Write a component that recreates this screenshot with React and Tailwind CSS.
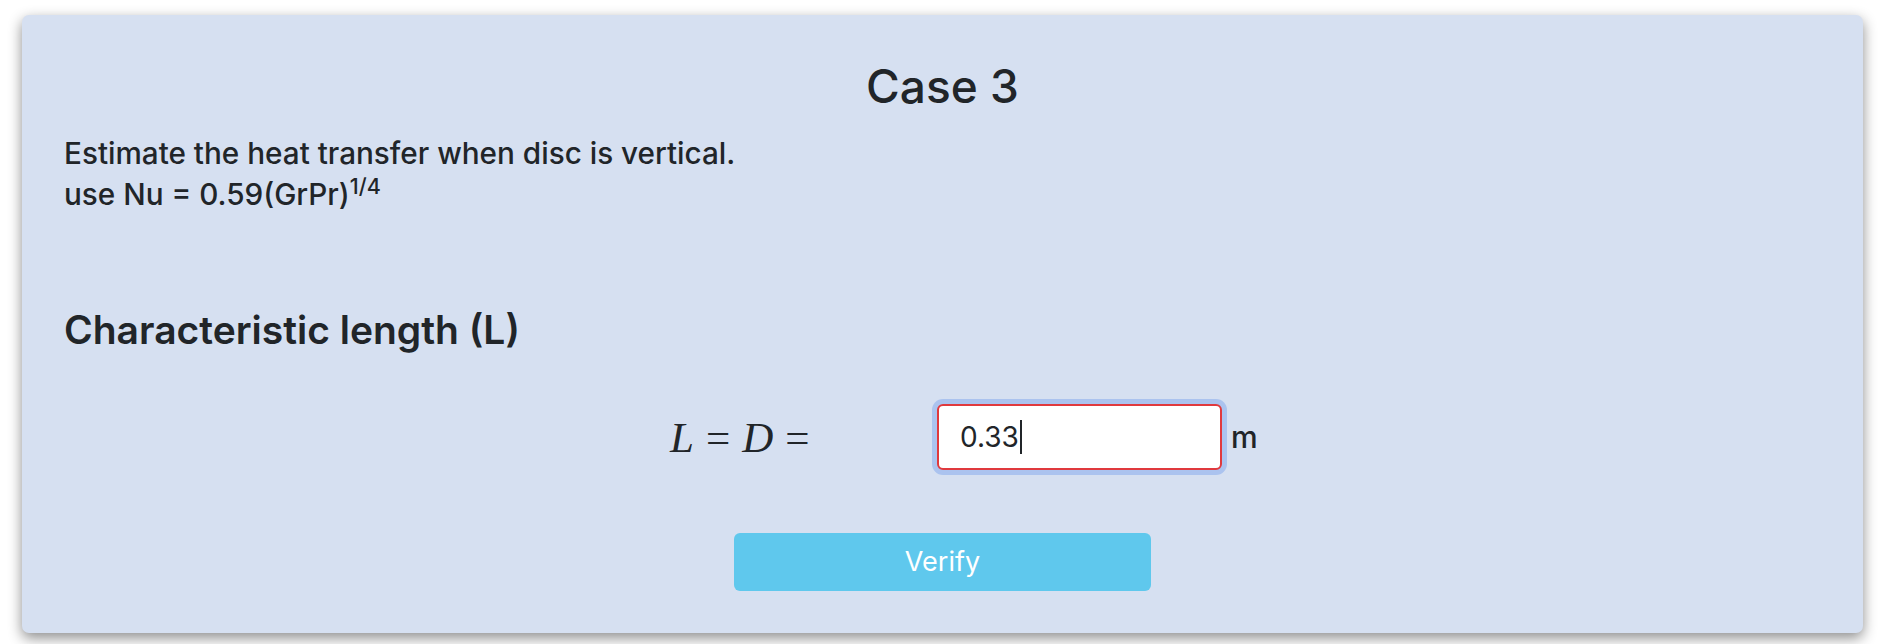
import React from "react";

export default function App() {
  return (
    <div className="min-h-[644px] w-full bg-white pt-[15px] pl-[22px] pr-[19px] pb-[11px]" style={{ fontFamily: "Inter, 'Noto Sans', sans-serif" }}>
      <div className="h-[618px] rounded-[7px] bg-[#d6e0f1] shadow-[0_5px_14px_rgba(0,0,0,0.45)] px-[42px] pt-[44px] text-[#212529]">
        <h2 className="text-center text-[46px] font-medium leading-[55px]">Case 3</h2>
        <div className="mt-[19px] text-[29.7px] font-medium leading-[41px]">
          <p>Estimate the heat transfer when disc is vertical.</p>
          <p>
            use Nu = 0.59(GrPr)<sup className="text-[21.5px] leading-none">1/4</sup>
          </p>
        </div>
        <h4 className="mt-[91px] text-[39px] font-semibold leading-[47px]">Characteristic length (L)</h4>
        <div className="mt-[51px] flex items-center">
          <div className="w-[606px]" />
          <div
            className="w-[267px] text-[43px] italic leading-none"
            style={{ fontFamily: "'Liberation Serif', 'DejaVu Serif', serif" }}
          >
            L<span className="not-italic mx-[12px]">=</span>D<span className="not-italic ml-[12px]">=</span>
          </div>
          <div className="flex items-center">
            <div className="flex h-[66px] w-[285px] items-center rounded-[6px] border-2 border-[#e0393e] bg-white pl-[21px] shadow-[0_0_0_5px_#abc3ef] text-[28px]">
              <span>0.33</span>
              <span className="ml-[1px] inline-block h-[34px] w-[2px] bg-[#212529]" />
            </div>
            <span className="ml-[9px] text-[30px] font-medium">m</span>
          </div>
        </div>
        <div className="mt-[63px] flex justify-center">
          <button className="h-[58px] w-[417px] rounded-[6px] bg-[#5fc8ed] text-[27px] text-white">Verify</button>
        </div>
      </div>
    </div>
  );
}
